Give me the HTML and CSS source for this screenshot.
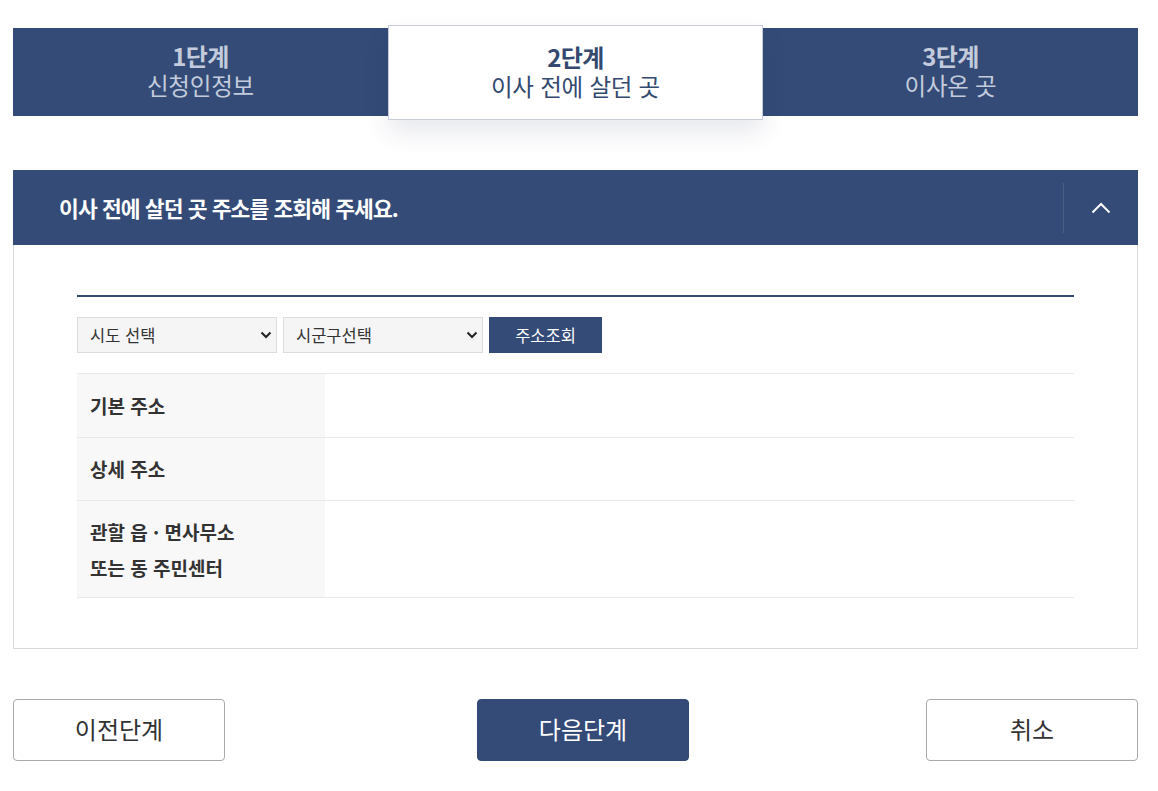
FILE: index.html
```html
<!DOCTYPE html>
<html lang="ko">
<head>
<meta charset="utf-8">
<title>이사 전에 살던 곳</title>
<link rel="stylesheet" href="styles.css">
</head>
<body>
<div class="page">
  <ol class="steps">
    <li class="step">
      <strong class="step-no">1단계</strong>
      <span class="step-name">신청인정보</span>
    </li>
    <li class="step active">
      <strong class="step-no">2단계</strong>
      <span class="step-name">이사 전에 살던 곳</span>
    </li>
    <li class="step">
      <strong class="step-no">3단계</strong>
      <span class="step-name">이사온 곳</span>
    </li>
  </ol>

  <section class="panel">
    <header class="panel-head">
      <h2 class="panel-title">이사 전에 살던 곳 주소를 조회해 주세요.</h2>
      <button class="toggle" type="button" aria-label="접기">
        <svg width="20" height="12" viewBox="0 0 20 12"><path d="M1.5 10.5 L10 2 L18.5 10.5" fill="none" stroke="#fff" stroke-width="2"/></svg>
      </button>
    </header>
    <div class="panel-body">
      <div class="search-row">
        <span class="select-wrap">
          <select class="sel"><option>시도 선택</option></select>
          <svg class="caret" width="12" height="8" viewBox="0 0 12 8"><path d="M1.5 1.5 L6 6 L10.5 1.5" fill="none" stroke="#222" stroke-width="2"/></svg>
        </span>
        <span class="select-wrap">
          <select class="sel"><option>시군구선택</option></select>
          <svg class="caret" width="12" height="8" viewBox="0 0 12 8"><path d="M1.5 1.5 L6 6 L10.5 1.5" fill="none" stroke="#222" stroke-width="2"/></svg>
        </span>
        <button class="search-btn" type="button">주소조회</button>
      </div>
      <table class="info">
        <tr class="r1"><th>기본 주소</th><td></td></tr>
        <tr class="r2"><th>상세 주소</th><td></td></tr>
        <tr class="r3"><th>관할 읍 · 면사무소<br>또는 동 주민센터</th><td></td></tr>
      </table>
    </div>
  </section>

  <div class="actions">
    <button class="btn btn-line" type="button">이전단계</button>
    <button class="btn btn-primary" type="button">다음단계</button>
    <button class="btn btn-line" type="button">취소</button>
  </div>
</div>
</body>
</html>
```
FILE: styles.css
```css
* { box-sizing: border-box; }
html, body { margin: 0; padding: 0; background: #fff; }
body {
  font-family: "Noto Sans CJK KR", "Noto Sans", sans-serif;
  color: #333;
}
.page {
  width: 1125px;
  margin-left: 13px;
  padding-top: 28px;
}

/* steps */
.steps {
  list-style: none;
  margin: 0;
  padding: 0;
  display: grid;
  grid-template-columns: repeat(3, 1fr);
  height: 88px;
  background: #344b77;
}
.step {
  display: flex;
  flex-direction: column;
  align-items: center;
  justify-content: center;
  padding-bottom: 3px;
  color: #c3cbdc;
}
.step-no {
  font-size: 24px;
  font-weight: 700;
  line-height: 29px;
  letter-spacing: -0.6px;
}
.step-name {
  font-size: 23.5px;
  font-weight: 400;
  line-height: 31px;
  letter-spacing: -0.2px;
}
.step.active {
  position: relative;
  z-index: 1;
  margin: -3px 0 -4px;
  padding-bottom: 2px;
  background: #fff;
  border: 1px solid #c8cbd9;
  color: #34496f;
  box-shadow: 0 12px 24px rgba(40, 50, 90, 0.11);
}

/* panel */
.panel { margin-top: 54px; }
.panel-head {
  height: 75px;
  background: #344b77;
  display: flex;
  align-items: center;
  justify-content: space-between;
}
.panel-title {
  margin: 0 0 0 46px;
  color: #fff;
  font-size: 21.5px;
  font-weight: 700;
  letter-spacing: -0.9px;
}
.toggle {
  height: 50px;
  width: 75px;
  border: 0;
  border-left: 1px solid #4a5e86;
  background: transparent;
  padding: 0;
  display: flex;
  align-items: center;
  justify-content: center;
  cursor: pointer;
}
.panel-body {
  border: 1px solid #d9d9d9;
  border-top: 0;
  padding: 50px 63px 50px 63px;
}
.search-row {
  border-top: 2px solid #34496f;
  padding: 20px 0;
  display: flex;
  gap: 6px;
}
.select-wrap { position: relative; display: block; }
.sel {
  appearance: none;
  -webkit-appearance: none;
  width: 200px;
  height: 36px;
  border: 1px solid #dcdcdc;
  background: #f5f5f5;
  font-family: inherit;
  font-size: 16.5px;
  color: #333;
  padding: 0 0 0 12px;
  border-radius: 0;
}
.caret {
  position: absolute;
  right: 5px;
  top: 14px;
  pointer-events: none;
}
.search-btn {
  width: 113px;
  height: 36px;
  border: 0;
  background: #344b77;
  color: #fff;
  font-family: inherit;
  font-size: 16.5px;
  padding: 0;
}
.info {
  width: 100%;
  border-collapse: collapse;
}
.info tr { border-top: 1px solid #e8e8e8; border-bottom: 1px solid #e8e8e8; }
.info th {
  width: 248px;
  background: #f8f8f8;
  text-align: left;
  font-size: 19px;
  font-weight: 700;
  color: #333;
  padding: 0 0 0 13px;
  line-height: 36px;
}
.info .r1 th { height: 64px; }
.info .r2 th { height: 63px; }
.info .r3 th { height: 97px; padding-top: 1px; }

/* actions */
.actions {
  margin-top: 50px;
  display: flex;
}
.btn {
  width: 212px;
  height: 62px;
  border-radius: 4px;
  font-family: inherit;
  font-size: 24px;
  padding: 0 0 3px;
  cursor: pointer;
}
.btn + .btn { margin-left: 252px; }
.btn + .btn + .btn { margin-left: 237px; }
.btn-line {
  background: #fff;
  border: 1px solid #aaa;
  color: #333;
}
.btn-primary {
  background: #344b77;
  border: 1px solid #344b77;
  color: #fff;
}
```
